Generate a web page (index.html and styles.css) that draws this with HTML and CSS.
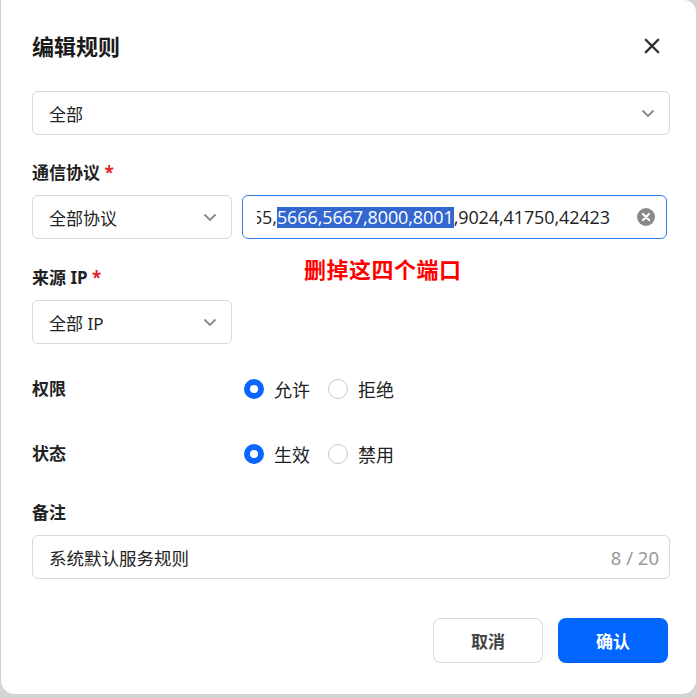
FILE: index.html
```html
<!DOCTYPE html>
<html lang="zh">
<head>
<meta charset="utf-8">
<link rel="stylesheet" href="styles.css">
</head>
<body>
<div class="modal">
  <div class="header">
    <h1 class="title">编辑规则</h1>
    <svg class="close" width="16" height="16" viewBox="0 0 16 16"><path d="M2 2L14 14M14 2L2 14" stroke="#333" stroke-width="2.4" stroke-linecap="square"/></svg>
  </div>
  <div class="body">
    <div class="select wide">
      <span>全部</span>
      <svg class="chev" width="14" height="9" viewBox="0 0 14 9"><path d="M1.5 1.5L7 7L12.5 1.5" fill="none" stroke="#888" stroke-width="1.8"/></svg>
    </div>

    <div class="label l-proto">通信协议 <span class="req">*</span></div>
    <div class="row">
      <div class="select narrow">
        <span>全部协议</span>
        <svg class="chev" width="14" height="9" viewBox="0 0 14 9"><path d="M1.5 1.5L7 7L12.5 1.5" fill="none" stroke="#888" stroke-width="1.8"/></svg>
      </div>
      <div class="input focus">
        <div class="scroll"><span class="val">8755,<span class="sel">5666,5667,8000,8001</span>,9024,41750,42423</span></div>
        <svg class="clear" width="18" height="18" viewBox="0 0 18 18"><circle cx="9" cy="9" r="9" fill="#8a8a8a"/><path d="M6 6L12 12M12 6L6 12" stroke="#fff" stroke-width="2.2" stroke-linecap="round"/></svg>
      </div>
      <div class="note">删掉这四个端口</div>
    </div>

    <div class="label l-ip">来源 IP <span class="req">*</span></div>
    <div class="select narrow">
      <span>全部 IP</span>
      <svg class="chev" width="14" height="9" viewBox="0 0 14 9"><path d="M1.5 1.5L7 7L12.5 1.5" fill="none" stroke="#888" stroke-width="1.8"/></svg>
    </div>

    <div class="radio-row r-perm">
      <div class="label inline">权限</div>
      <div class="radios">
        <label class="radio"><span class="dot on"></span>允许</label>
        <label class="radio"><span class="dot"></span>拒绝</label>
      </div>
    </div>
    <div class="radio-row r-state">
      <div class="label inline">状态</div>
      <div class="radios">
        <label class="radio"><span class="dot on"></span>生效</label>
        <label class="radio"><span class="dot"></span>禁用</label>
      </div>
    </div>

    <div class="label l-remark">备注</div>
    <div class="input remark">
      <span class="text">系统默认服务规则</span>
      <span class="count">8 / 20</span>
    </div>
  </div>
  <div class="footer">
    <button class="btn cancel">取消</button>
    <button class="btn ok">确认</button>
  </div>
</div>
</body>
</html>
```

FILE: styles.css
```css
* { box-sizing: border-box; }
html, body { margin: 0; padding: 0; }
body {
  width: 697px;
  height: 698px;
  background: #d4d4d4;
  font-family: "Noto Sans", "Noto Sans CJK SC", sans-serif;
  color: #222;
  overflow: hidden;
}
.modal {
  position: relative;
  margin-left: 1px;
  width: 695px;
  height: 694px;
  background: #fff;
  border-radius: 0 12px 14px 14px;
  display: flex;
  flex-direction: column;
  padding: 0 28px 0 31px;
}
.header {
  height: 91px;
  display: flex;
  align-items: center;
  justify-content: space-between;
  padding-right: 8px;
}
.title {
  margin: 0;
  font-size: 22px;
  font-weight: 700;
  color: #1a1a1a;
  line-height: 28px;
}
.close { display: block; }
.body { display: flex; flex-direction: column; }
.select, .input {
  height: 44px;
  border: 1px solid #d9d9d9;
  border-radius: 6px;
  display: flex;
  align-items: center;
  padding: 0 14px 0 16px;
  font-size: 17px;
  color: #222;
  background: #fff;
}
.select { justify-content: space-between; }
.select.wide { width: 638px; }
.select.narrow { width: 200px; }
.chev { display: block; }
.label {
  font-size: 17px;
  font-weight: 700;
  line-height: 22px;
  color: #222;
}
.req { color: #e5202a; font-weight: 700; }
.l-proto { margin-top: 27px; margin-bottom: 11px; }
.l-ip { margin-top: 28px; margin-bottom: 11px; }
.row {
  position: relative;
  display: flex;
  gap: 10px;
}
.input.focus {
  width: 425px;
  border-color: #2f7bf0;
  padding: 0 11px 0 14px;
  gap: 10px;
}
.scroll {
  flex: 1;
  overflow: hidden;
  display: flex;
  justify-content: flex-end;
  white-space: nowrap;
  font-family: "Open Sans", "Noto Sans", sans-serif;
  font-size: 18px;
  letter-spacing: -0.1px;
  padding-right: 17px;
}
.val { line-height: 21px; }
.sel { background: #3367d0; color: #fff; }
.clear { display: block; flex: none; }
.note {
  position: absolute;
  left: 272px;
  top: 61px;
  color: #ff0000;
  font-weight: 700;
  font-size: 22px;
  line-height: 26px;
  letter-spacing: 0.5px;
}
.radio-row {
  display: flex;
  align-items: center;
  height: 22px;
}
.r-perm { margin-top: 34px; }
.r-state { margin-top: 43px; }
.label.inline { width: 212px; }
.radios { display: flex; gap: 18px; }
.radio {
  display: flex;
  align-items: center;
  gap: 10px;
  font-size: 18px;
  color: #222;
}
.dot {
  width: 20px;
  height: 20px;
  border-radius: 50%;
  border: 1px solid #c8c8c8;
  background: #fff;
}
.dot.on {
  border: 6px solid #0a66ff;
}
.l-remark { margin-top: 37px; margin-bottom: 11px; }
.input.remark {
  width: 638px;
  justify-content: space-between;
  padding-right: 10px;
}
.text { font-size: 17.5px; }
.count { color: #999; font-size: 18.5px; }
.footer {
  margin-top: 39px;
  display: flex;
  justify-content: flex-end;
  gap: 15px;
}
.btn {
  width: 110px;
  height: 45px;
  border-radius: 8px;
  font-family: "Noto Sans CJK SC", sans-serif;
  font-size: 17px;
  font-weight: 700;
  cursor: pointer;
}
.btn.cancel {
  background: #fff;
  border: 1px solid #d9d9d9;
  color: #444;
}
.btn.ok {
  background: #0066ff;
  border: none;
  color: #fff;
}
```
